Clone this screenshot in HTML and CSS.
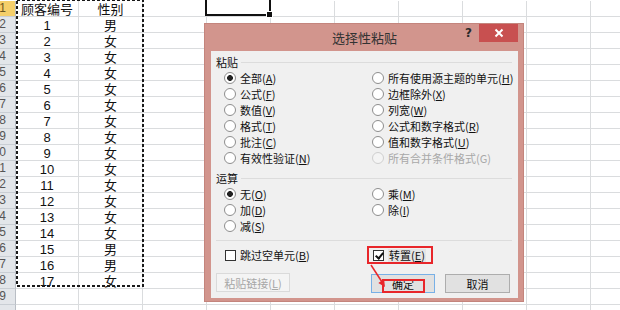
FILE: index.html
```html
<!DOCTYPE html>
<html lang="zh-CN">

<head>
  <meta charset="UTF-8">
  <title>选择性粘贴</title>
  <link rel="stylesheet" href="styles.css">
</head>

<body>
  <div class="page">
    <div class="sheet" id="sheet">
      <svg class="marquee" width="130" height="290">
        <rect x="2" y="1" width="126" height="286" fill="none" stroke="#1a1a1a" stroke-width="2" stroke-dasharray="3 2"></rect>
      </svg>
      <div class="active-cell"><span class="handle"></span></div>
    </div>

    <div class="dialog">
      <div class="titlebar">
        <span></span>
        <span class="title">选择性粘贴</span>
        <div class="caption-btns">
          <span class="help">?</span>
          <span class="close">
            <svg width="10" height="10" viewBox="0 0 10 10"><path d="M1.5 1.5 L8.5 8.5 M8.5 1.5 L1.5 8.5" stroke="#fff" stroke-width="2"></path></svg>
          </span>
        </div>
      </div>

      <div class="client">
        <div class="group-title"><span>粘贴</span></div>
        <div class="options">
          <label class="radio checked"><i></i>全部(<u>A</u>)</label>
          <label class="radio"><i></i>所有使用源主题的单元(<u>H</u>)</label>
          <label class="radio"><i></i>公式(<u>F</u>)</label>
          <label class="radio"><i></i>边框除外(<u>X</u>)</label>
          <label class="radio"><i></i>数值(<u>V</u>)</label>
          <label class="radio"><i></i>列宽(<u>W</u>)</label>
          <label class="radio"><i></i>格式(<u>T</u>)</label>
          <label class="radio"><i></i>公式和数字格式(<u>R</u>)</label>
          <label class="radio"><i></i>批注(<u>C</u>)</label>
          <label class="radio"><i></i>值和数字格式(<u>U</u>)</label>
          <label class="radio"><i></i>有效性验证(<u>N</u>)</label>
          <label class="radio disabled"><i></i>所有合并条件格式(G)</label>
        </div>

        <div class="group-title second"><span>运算</span></div>
        <div class="options">
          <label class="radio checked"><i></i>无(<u>O</u>)</label>
          <label class="radio"><i></i>乘(<u>M</u>)</label>
          <label class="radio"><i></i>加(<u>D</u>)</label>
          <label class="radio"><i></i>除(<u>I</u>)</label>
          <label class="radio"><i></i>减(<u>S</u>)</label>
        </div>

        <div class="sep"></div>

        <div class="options checks">
          <label class="check"><i></i>跳过空单元(<u>B</u>)</label>
          <label class="check checked marked"><i></i><span class="focus">转置(<u>E</u>)</span></label>
        </div>

        <div class="buttons">
          <button class="btn" disabled>粘贴链接(<u>L</u>)</button>
          <span class="spacer"></span>
          <button class="btn default">确定</button>
          <button class="btn">取消</button>
        </div>
      </div>
    </div>

    <svg class="arrow" width="28" height="32" viewBox="0 0 28 32">
      <line x1="7" y1="5" x2="18" y2="22" stroke="#e8262a" stroke-width="1.5"></line>
      <polygon points="21,27 20.1,19.2 14.3,23" fill="#e8262a"></polygon>
    </svg>
  </div>

  <script>
    // build the worksheet behind the dialog
    const genders = ['男', '女', '女', '女', '女', '女', '女', '女', '女', '女', '女', '女', '女', '女', '男', '男', '女'];
    const sheet = document.getElementById('sheet');
    const frag = document.createDocumentFragment();

    for (let r = 1; r <= 20; r++) {
      const head = document.createElement('div');
      head.className = 'row-head' + (r === 1 ? ' current' : '');
      if (r < 20) head.textContent = r;
      frag.appendChild(head);

      for (let c = 0; c < 10; c++) {
        const cell = document.createElement('div');
        cell.className = 'cell';
        if (r === 1 && c === 0) cell.textContent = '顾客编号';
        if (r === 1 && c === 1) cell.textContent = '性别';
        if (r > 1 && r <= 18 && c === 0) cell.textContent = r - 1;
        if (r > 1 && r <= 18 && c === 1) cell.textContent = genders[r - 2];
        frag.appendChild(cell);
      }
    }
    sheet.insertBefore(frag, sheet.firstChild);
  </script>
</body>

</html>
```

FILE: styles.css
```css
body {
  margin: 0;
  font-family: "Noto Sans CJK SC", sans-serif;
  background-color: #fff;
}

.page {
  position: relative;
  width: 620px;
  height: 310px;
  overflow: hidden;
}

/* worksheet */

.sheet {
  position: relative;
  display: grid;
  grid-template-columns: 16px 63px repeat(9, 64px);
  grid-auto-rows: 16px;
  padding-top: 1px;
}

.row-head,
.cell {
  box-sizing: border-box;
  border-right: 1px solid #dadcde;
  border-bottom: 1px solid #dadcde;
  overflow: hidden;
  white-space: nowrap;
}

.row-head {
  background: #e3e6ea;
  border-right-color: #b9bec5;
  border-bottom-color: #c9ced4;
  color: #555;
  font-family: "Liberation Sans", sans-serif;
  font-size: 12px;
  line-height: 15px;
  direction: rtl;
  text-align: right;
  padding-right: 9px;
}

.row-head.current {
  background: #f5cf6a;
  color: #6b5620;
}

.cell {
  font-family: "Liberation Sans", "Noto Sans CJK SC", sans-serif;
  font-size: 13px;
  line-height: 17px;
  text-align: center;
  color: #111;
}

.marquee {
  position: absolute;
  left: 15px;
  top: -1px;
}

.active-cell {
  position: absolute;
  left: 205px;
  top: -2px;
  width: 66px;
  height: 18px;
  box-sizing: border-box;
  border: 2px solid #111;
  border-top-color: #e3b548;
}

.active-cell .handle {
  position: absolute;
  right: -4px;
  bottom: -4px;
  width: 5px;
  height: 5px;
  background: #111;
  border: 1px solid #fff;
}

/* dialog */

.dialog {
  position: absolute;
  left: 204px;
  top: 23px;
  width: 320px;
  height: 279px;
  box-sizing: border-box;
  background: #d2958d;
  border: 1px solid #c4857d;
  padding: 0 5px 3px 6px;
  display: flex;
  flex-direction: column;
}

.titlebar {
  height: 27px;
  display: grid;
  grid-template-columns: 1fr auto 1fr;
}

.title {
  font-size: 13px;
  line-height: 28px;
  color: #333;
}

.caption-btns {
  display: flex;
  justify-content: flex-end;
  align-items: flex-start;
  gap: 7px;
}

.help {
  font-family: "DejaVu Sans", sans-serif;
  font-weight: bold;
  font-size: 12px;
  line-height: 18px;
  color: #2a2a2a;
}

.close {
  width: 39px;
  height: 18px;
  background: #c85050;
  display: flex;
  align-items: center;
  justify-content: center;
}

.client {
  flex: 1;
  background: #f0f0f0;
  padding: 3px 6px 0 5px;
  font-size: 11px;
  color: #111;
}

.group-title {
  display: flex;
  align-items: center;
  height: 16px;
  gap: 3px;
}

.group-title::after {
  content: "";
  flex: 1;
  border-top: 1px solid #dcdcdc;
}

.group-title.second {
  margin-top: 4px;
}

.options {
  display: grid;
  grid-template-columns: 148px auto;
  grid-auto-rows: 16px;
  padding-left: 8px;
}

.radio,
.check {
  display: flex;
  align-items: center;
  white-space: nowrap;
}

.radio i {
  width: 12px;
  height: 12px;
  box-sizing: border-box;
  border: 1px solid #8e8e8e;
  border-radius: 50%;
  background: #fff;
  margin-right: 4px;
}

.radio.checked i {
  background: radial-gradient(circle, #222 0 2.6px, #fff 3.2px);
}

.radio.disabled {
  color: #a8a8a8;
}

.radio.disabled i {
  border-color: #cfcfcf;
  background: #f4f4f4;
}

.sep {
  margin: 6px 0;
  border-top: 1px solid #dcdcdc;
}

.check i {
  width: 11px;
  height: 11px;
  box-sizing: border-box;
  border: 1px solid #333;
  background: #fff;
  margin: 0 4px 0 1px;
  position: relative;
}

.check.checked i::after {
  content: "";
  position: absolute;
  left: 2.5px;
  top: 0;
  width: 3px;
  height: 6px;
  border-right: 2px solid #111;
  border-bottom: 2px solid #111;
  transform: rotate(40deg);
}

.check.marked {
  justify-self: start;
  align-self: center;
  height: 14px;
  margin-left: -3px;
  padding: 0 5px 0 3px;
  outline: 2px solid #e8262a;
}

.check.marked .focus {
  background: #e4e4e4;
  padding: 0 1px;
  line-height: 13px;
}

.buttons {
  display: flex;
  gap: 10px;
  margin-top: 10px;
  padding-right: 2px;
}

.spacer {
  flex: 1;
}

.btn {
  position: relative;
  height: 19px;
  width: 65px;
  padding: 0;
  font-family: "Noto Sans CJK SC", sans-serif;
  font-size: 11px;
  color: #111;
  background: #e1e1e1;
  border: 1px solid #adadad;
}

.btn:disabled {
  width: 74px;
  background: #f4f4f4;
  border-color: #dadada;
  color: #a6a6a6;
}

.btn.default {
  width: 64px;
  border-color: #78b0e6;
  margin-top: 1px;
}

.btn.default::after {
  content: "";
  position: absolute;
  left: 10px;
  right: 9px;
  top: 4px;
  bottom: -1px;
  border: 2px solid #e8262a;
}

.btn:not(.default):not(:disabled) {
  margin-top: 1px;
}

.arrow {
  position: absolute;
  left: 364px;
  top: 260px;
}
```
